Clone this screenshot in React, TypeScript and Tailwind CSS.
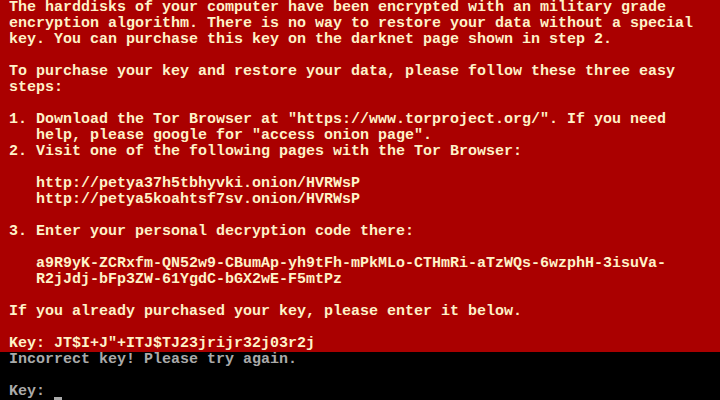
const redLines = [
  "The harddisks of your computer have been encrypted with an military grade",
  "encryption algorithm. There is no way to restore your data without a special",
  "key. You can purchase this key on the darknet page shown in step 2.",
  "",
  "To purchase your key and restore your data, please follow these three easy",
  "steps:",
  "",
  '1. Download the Tor Browser at "https://www.torproject.org/". If you need',
  '   help, please google for "access onion page".',
  "2. Visit one of the following pages with the Tor Browser:",
  "",
  "   http://petya37h5tbhyvki.onion/HVRWsP",
  "   http://petya5koahtsf7sv.onion/HVRWsP",
  "",
  "3. Enter your personal decryption code there:",
  "",
  "   a9R9yK-ZCRxfm-QN52w9-CBumAp-yh9tFh-mPkMLo-CTHmRi-aTzWQs-6wzphH-3isuVa-",
  "   R2jJdj-bFp3ZW-61YgdC-bGX2wE-F5mtPz",
  "",
  "If you already purchased your key, please enter it below.",
  "",
  'Key: JT$I+J"+ITJ$TJ23jrijr32j03r2j',
];

const App = () => {
  return (
    <div
      className="w-[720px] h-[400px] overflow-hidden bg-black text-[15px] leading-[16px]"
      style={{ fontFamily: '"Liberation Mono", "DejaVu Sans Mono", monospace' }}
    >
      <div className="bg-[#aa0000] text-[#fff2c8] font-bold pl-[9px] h-[352px]">
        {redLines.map((line, i) => (
          <div key={i} className="h-[16px] whitespace-pre">
            {line}
          </div>
        ))}
      </div>
      <div className="text-[#aaaaaa] font-bold pl-[9px]">
        <div className="h-[16px] whitespace-pre">Incorrect key! Please try again.</div>
        <div className="h-[16px]"></div>
        <div className="h-[16px] whitespace-pre flex">
          <span>Key: </span>
          <span className="w-[9px] h-[16px] flex items-end">
            <span className="w-[8px] h-[3px] bg-[#aaaaaa]"></span>
          </span>
        </div>
      </div>
    </div>
  );
};

export default App;
